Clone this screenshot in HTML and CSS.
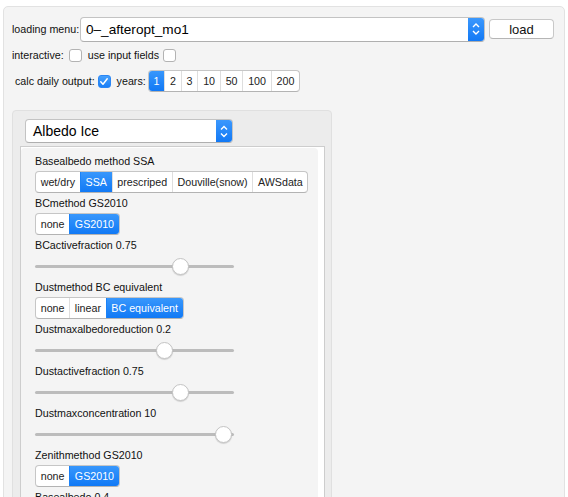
FILE: index.html
```html
<!DOCTYPE html>
<html>
<head>
<meta charset="utf-8">
<link rel="stylesheet" href="styles.css">
</head>
<body>
<div class="outer">
  <div class="row r1">
    <span class="lbl">loading menu:</span>
    <div class="select wide">
      <span class="sel-text">0–_afteropt_mo1</span>
      <span class="arrows"><svg width="16" height="24" viewBox="0 0 16 24"><path d="M5 10 L8 7 L11 10 M5 14 L8 17 L11 14" fill="none" stroke="#fff" stroke-width="1.4"/></svg></span>
    </div>
    <button class="btn">load</button>
  </div>
  <div class="row r2">
    <span class="lbl">interactive:</span>
    <span class="cb cb-a"></span>
    <span class="lbl">use input fields</span>
    <span class="cb cb-b"></span>
  </div>
  <div class="row r3">
    <span class="lbl">calc daily output:</span>
    <span class="cb on"><svg width="13" height="13" viewBox="0 0 13 13"><path d="M3 6.8 L5.4 9.4 L10 3.6" fill="none" stroke="#fff" stroke-width="1.6" stroke-linecap="round" stroke-linejoin="round"/></svg></span>
    <span class="lbl years">years:</span>
    <div class="seg yseg">
      <span class="sb active">1</span><span class="sb">2</span><span class="sb">3</span><span class="sb">10</span><span class="sb">50</span><span class="sb">100</span><span class="sb">200</span>
    </div>
  </div>
  <div class="inner">
    <div class="select albedo">
      <span class="sel-text">Albedo Ice</span>
      <span class="arrows"><svg width="16" height="23" viewBox="0 0 16 23"><path d="M5 9.5 L8 6.5 L11 9.5 M5 13.5 L8 16.5 L11 13.5" fill="none" stroke="#fff" stroke-width="1.4"/></svg></span>
    </div>
    <div class="box">
      <div class="content">
        <div class="widget">
          <div class="wl">Basealbedo method SSA</div>
          <div class="seg"><span class="sb">wet/dry</span><span class="sb active">SSA</span><span class="sb">prescriped</span><span class="sb">Douville(snow)</span><span class="sb">AWSdata</span></div>
        </div>
        <div class="widget">
          <div class="wl">BCmethod GS2010</div>
          <div class="seg"><span class="sb">none</span><span class="sb active">GS2010</span></div>
        </div>
        <div class="widget">
          <div class="wl">BCactivefraction 0.75</div>
          <input class="slider" type="range" min="0" max="1" step="0.01" value="0.75">
        </div>
        <div class="widget">
          <div class="wl">Dustmethod BC equivalent</div>
          <div class="seg"><span class="sb">none</span><span class="sb">linear</span><span class="sb active">BC equivalent</span></div>
        </div>
        <div class="widget">
          <div class="wl">Dustmaxalbedoreduction 0.2</div>
          <input class="slider" type="range" min="0" max="0.3" step="0.01" value="0.2">
        </div>
        <div class="widget">
          <div class="wl">Dustactivefraction 0.75</div>
          <input class="slider" type="range" min="0" max="1" step="0.01" value="0.75">
        </div>
        <div class="widget">
          <div class="wl">Dustmaxconcentration 10</div>
          <input class="slider" type="range" min="0" max="10.1" step="0.1" value="10">
        </div>
        <div class="widget">
          <div class="wl">Zenithmethod GS2010</div>
          <div class="seg"><span class="sb">none</span><span class="sb active">GS2010</span></div>
        </div>
        <div class="widget">
          <div class="wl">Basealbedo 0.4</div>
          <input class="slider" type="range" min="0" max="1" step="0.01" value="0.4">
        </div>
      </div>
    </div>
  </div>
</div>
</body>
</html>
```

FILE: styles.css
```css
* { box-sizing: border-box; }
html, body {
  margin: 0;
  padding: 0;
  background: #ffffff;
  height: 497px;
  overflow: hidden;
}
body {
  font-family: "Liberation Sans", Arial, sans-serif;
  font-size: 10.7px;
  color: #111;
}
.outer {
  margin: 6px 3px 0 3px;
  border: 1px solid #e2e2e2;
  border-radius: 5px;
  background: #f4f4f4;
  padding: 10px 8px 0 8px;
  height: 560px;
}
.row {
  display: flex;
  align-items: center;
}
.lbl { white-space: nowrap; }
.r1 { height: 24px; }
.r1 .lbl { width: 68px; }
.select {
  display: flex;
  align-items: stretch;
  background: #fff;
  border: 1px solid #c3c3c3;
  border-bottom-color: #afafaf;
  border-radius: 4px;
  overflow: hidden;
}
.select .sel-text {
  flex: 1;
  display: flex;
  align-items: center;
  font-size: 13.6px;
  color: #000;
  padding-left: 5px;
}
.select .arrows {
  width: 16px;
  background: linear-gradient(#3b98fd, #1279f5);
  display: flex;
  align-items: center;
  justify-content: center;
}
.select.wide {
  width: 405px;
  height: 25px;
}
.btn {
  margin-left: 4px;
  width: 65px;
  height: 20px;
  background: #fff;
  border: 1px solid #c8c8c8;
  border-bottom-color: #b5b5b5;
  border-radius: 4px;
  font-family: "Liberation Sans", Arial, sans-serif;
  font-size: 13px;
  color: #111;
  padding: 0;
}
.r2 {
  margin-top: 7px;
  height: 14px;
}
.cb {
  width: 13px;
  height: 13px;
  border: 1px solid #b3b3b3;
  border-radius: 3px;
  background: #fff;
  display: inline-flex;
}
.cb-a { margin: 0 6px 0 5px; }
.cb-b { margin-left: 4px; }
.cb.on {
  border-color: #2a86f5;
  background: linear-gradient(#46a0fc, #1a7ff7);
  margin: 0 6px 0 3px;
}
.cb.on svg { margin: -1px 0 0 -1px; }
.r3 {
  margin-top: 8px;
  height: 22px;
  padding-left: 3px;
}
.years { margin-right: 2px; }
.seg {
  display: inline-flex;
  height: 22px;
  background: #fff;
  border: 1px solid #c6c6c6;
  border-bottom-color: #b3b3b3;
  border-radius: 4px;
  overflow: hidden;
}
.sb {
  display: flex;
  align-items: center;
  padding: 0 4.7px;
  color: #222;
  white-space: nowrap;
  border-left: 1px solid #dedede;
}
.sb:first-child { border-left: none; }
.sb.active {
  background: linear-gradient(#3897fc, #1179f5);
  color: #fff;
  border-left-color: #1b82f7;
}
.yseg { height: 22px; }
.yseg .sb { padding: 0 4.8px; }
.inner {
  margin-top: 18px;
  width: 320px;
  background: #ececec;
  border: 1px solid #e0e0e0;
  border-radius: 4px;
  padding: 8px 6px 0 7px;
  height: 420px;
}
.select.albedo {
  margin-left: 5px;
  width: 208px;
  height: 24px;
}
.select.albedo .sel-text { font-size: 14px; padding-left: 7px; }
.box {
  margin-top: 3px;
  background: #fff;
  border: 1px solid #cdcdcd;
  padding: 1px 6px 0 0;
  height: 400px;
}
.content {
  background: #f4f4f4;
  border-radius: 4px 4px 0 0;
  padding: 6px 0 0 14px;
  height: 398px;
}
.widget {
  display: flex;
  flex-direction: column;
  align-items: flex-start;
}
.wl {
  height: 14px;
  line-height: 14px;
  margin-bottom: 3px;
  white-space: nowrap;
}
.widget .seg { margin-bottom: 3px; }
.slider {
  -webkit-appearance: none;
  appearance: none;
  width: 199px;
  height: 22px;
  margin: 0 0 3px 0;
  padding: 0;
  background: transparent;
}
.slider::-webkit-slider-runnable-track {
  height: 3px;
  background: #bcbcbc;
  border-radius: 2px;
}
.slider::-webkit-slider-thumb {
  -webkit-appearance: none;
  width: 17px;
  height: 17px;
  margin-top: -7px;
  border-radius: 50%;
  background: #fff;
  border: 1px solid #c4c4c4;
  box-shadow: 0 1px 1px rgba(0,0,0,0.15);
}
```
